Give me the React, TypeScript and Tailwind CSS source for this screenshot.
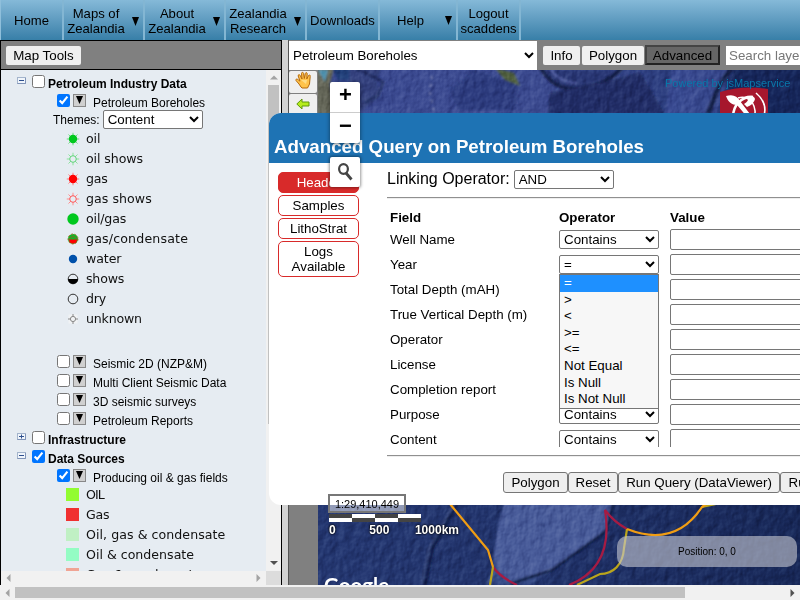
import React from "react";

const navItems = [
  { label: "Home", width: "w-[63px]", arrow: false },
  { label: "Maps of Zealandia", width: "w-[81px]", arrow: true },
  { label: "About Zealandia", width: "w-[81px]", arrow: true },
  { label: "Zealandia Research", width: "w-[81px]", arrow: true },
  { label: "Downloads", width: "w-[73px]", arrow: false },
  { label: "Help", width: "w-[78px]", arrow: true },
  { label: "Logout scaddens", width: "w-[63px]", arrow: false },
];

function NavBar() {
  return (
    <nav className="flex h-10 shrink-0 border-l border-[#8fbfdb] bg-linear-to-b from-[#85b9d8] to-[#377fa8] text-[13.1px] leading-[15px]">
      {navItems.map((n) => (
        <div key={n.label} className={`flex shrink-0 items-center border-r-2 border-[#83b6d3] ${n.label.includes(" ") ? "pt-[2px]" : ""} ${n.width}`}>
          <span className={`flex-1 text-center ${n.arrow ? "pr-1" : ""}`}>{n.label}</span>
          {n.arrow && (
            <svg className="mr-1 h-[9px] w-[7px] shrink-0" viewBox="0 0 7 9">
              <path d="M0 0H7L3.5 9Z" />
            </svg>
          )}
        </div>
      ))}
    </nav>
  );
}

const spokes = "M6.5 0V13M0 6.5H13M2 2L11 11M11 2L2 11";

function WellIcon({ kind }: { kind: string }) {
  return (
    <svg className="h-[13px] w-[13px] shrink-0 translate-x-[0.5px] translate-y-[0.5px]" viewBox="0 0 13 13" fill="none">
      {kind === "oil" && <><path d={spokes} stroke="#6fd884" /><circle cx="6.5" cy="6.5" r="4.2" fill="#00c81e" /></>}
      {kind === "oil shows" && <><path d={spokes} stroke="#8be29c" /><circle cx="6.5" cy="6.5" r="3.3" fill="#e6ecf2" stroke="#5fd478" /></>}
      {kind === "gas" && <><path d={spokes} stroke="#ff7d7d" /><circle cx="6.5" cy="6.5" r="4.2" fill="#f00" /></>}
      {kind === "gas shows" && <><path d={spokes} stroke="#ff8c8c" /><circle cx="6.5" cy="6.5" r="3.3" fill="#e6ecf2" stroke="#f55" /></>}
      {kind === "oil/gas" && <circle cx="6.5" cy="6.5" r="5.7" fill="#00c81e" />}
      {kind === "gas/condensate" && (
        <>
          <circle cx="6.5" cy="6.5" r="5" fill="#14b428" stroke="#a87832" strokeDasharray="2 1.5" />
          <path d="M2.5 7H10.5A4 4 0 0 1 2.5 7Z" fill="#f00" />
          <path d="M2 7L6.5 3.5L11 7" stroke="#7a7020" />
        </>
      )}
      {kind === "water" && <circle cx="6.5" cy="6.5" r="4.2" fill="#0050aa" />}
      {kind === "shows" && <><circle cx="6.5" cy="6.5" r="4.8" stroke="#333" /><path d="M1.5 6.5H11.5A5 5 0 0 1 1.5 6.5Z" fill="#000" /></>}
      {kind === "dry" && <circle cx="6.5" cy="6.5" r="4.8" stroke="#333" />}
      {kind === "unknown" && <><rect x="2" y="2" width="9" height="9" fill="#f0f2f4" /><path d="M6.5 1.5V11.5M1.5 6.5H11.5" stroke="#888" /><circle cx="6.5" cy="6.5" r="2.6" fill="#f0f2f4" stroke="#888" /></>}
    </svg>
  );
}

const wells = [
  ["oil", "tracking-[-0.1px]"],
  ["oil shows", "tracking-[-0.1px]"],
  ["gas", "tracking-[-0.2px]"],
  ["gas shows", "tracking-[0.05px]"],
  ["oil/gas", "tracking-[-0.15px]"],
  ["gas/condensate", "tracking-[0.16px]"],
  ["water", "tracking-[-0.1px]"],
  ["shows", "tracking-[-0.2px]"],
  ["dry", "tracking-[-0.2px]"],
  ["unknown", "tracking-[-0.2px]"],
];
const fields = [
  ["OIL", "bg-[#92fc30]", "tracking-[-0.9px]"],
  ["Gas", "bg-[#f03030]", "tracking-[-0.2px]"],
  ["Oil, gas & condensate", "bg-[#c0f0c4]", "tracking-[0.05px]"],
  ["Oil & condensate", "bg-[#94fcc4]", "tracking-[0px]"],
  ["Gas & condensate", "bg-[#f0a494]", "tracking-[0px]"],
];

function Toggle({ open }: { open: boolean }) {
  return (
    <svg className="mr-[6px] h-[9px] w-[9px] shrink-0 -translate-y-[4px]" viewBox="0 0 9 9">
      <rect x=".5" y="1.5" width="8" height="6" fill="#f0f5fb" stroke="#a3b4cc" />
      <path d="M.5 7.5H8.5V2" fill="none" stroke="#8094b8" />
      <path d={open ? "M2 4.5H7" : "M2 4.5H7M4.5 2.5V6.5"} stroke="#2d4f8e" />
    </svg>
  );
}

function Group({ label, open, checked }: { label: string; open: boolean; checked: boolean }) {
  return (
    <div className="flex h-[19px] shrink-0 items-center pl-4">
      <Toggle open={open} />
      <input type="checkbox" defaultChecked={checked} className="mr-[3px] h-[13px] w-[13px] -translate-y-[3px]" />
      <b className="whitespace-nowrap">{label}</b>
    </div>
  );
}

function Layer({ label, checked = false }: { label: string; checked?: boolean }) {
  return (
    <div className="flex h-[19px] shrink-0 items-center pl-14">
      <input type="checkbox" defaultChecked={checked} className="mr-[3px] h-[13px] w-[13px] -translate-y-[3px]" />
      <span className="mr-[7px] flex h-[13px] w-[13px] shrink-0 -translate-y-[3px] justify-center border border-[#888] bg-[#d0d0d0] pt-[1px]">
        <svg className="h-2 w-[7px]" viewBox="0 0 7 8"><path d="M0 0H7L3.5 8Z" /></svg>
      </span>
      <span className="whitespace-nowrap">{label}</span>
    </div>
  );
}

const legendText = "whitespace-nowrap font-['DejaVu_Sans'] text-[12.6px] text-[#111]";

function ArrowHead({ dir, dark }: { dir: "up" | "down" | "left" | "right"; dark?: boolean }) {
  const d = { up: "M4 7.5L8 3.5L12 7.5Z", down: "M4 4L8 8L12 4Z", left: "M9.5 2L5.5 6L9.5 10Z", right: "M6.5 2L10.5 6L6.5 10Z" }[dir];
  return <svg className="h-3 w-4 shrink-0" viewBox="0 0 16 12"><path d={d} fill={dark ? "#505050" : "#a3a3a3"} /></svg>;
}

function LayerPanel() {
  return (
    <aside className="flex w-[282px] shrink-0 flex-col border-x border-t border-black">
      <div className="flex h-[29px] shrink-0 items-center border-b border-black bg-[#808080] pl-[5px]">
        <button className="h-[19px] w-[75px] rounded-[2px] bg-[#efefef] text-[13.33px] leading-[19px]">Map Tools</button>
      </div>
      <div className="flex min-h-0 flex-1">
        <div className="flex min-w-0 flex-1 flex-col">
          <div className="flex min-h-0 flex-1 flex-col overflow-hidden bg-[#e6ecf2] pt-[5px] text-[12px] leading-[19px]">
            <Group label="Petroleum Industry Data" open checked={false} />
            <div className="h-[16px] shrink-0"><Layer label="Petroleum Boreholes" checked /></div>
            <div className="flex h-[19px] shrink-0 items-center pl-[52px]">
              <span className="mr-[3px] translate-y-px">Themes:</span>
              <select className="h-[19px] w-[100px] rounded-[2px] border border-[#767676] bg-white text-[13.33px]"><option>Content</option></select>
            </div>
            {wells.map(([name, spacing]) => (
              <div key={name} className="flex h-5 shrink-0 items-center gap-[7px] pb-px pl-[65px]">
                <WellIcon kind={name} />
                <span className={`${legendText} ${spacing}`}>{name}</span>
              </div>
            ))}
            <div className="h-[26px] shrink-0" />
            <Layer label="Seismic 2D (NZP&M)" />
            <Layer label="Multi Client Seismic Data" />
            <Layer label="3D seismic surveys" />
            <Layer label="Petroleum Reports" />
            <Group label="Infrastructure" open={false} checked={false} />
            <Group label="Data Sources" open checked />
            <div className="h-[16px] shrink-0"><Layer label="Producing oil & gas fields" checked /></div>
            {fields.map(([name, color, spacing]) => (
              <div key={name} className="flex h-5 shrink-0 items-center gap-[7px] pb-px pl-[65px]">
                <span className={`h-[13px] w-[13px] shrink-0 ${color}`} />
                <span className={`${legendText} ${spacing}`}>{name}</span>
              </div>
            ))}
          </div>
          <div className="flex h-[14px] shrink-0 items-center justify-between bg-[#f1f1f1]">
            <ArrowHead dir="left" /><ArrowHead dir="right" />
          </div>
        </div>
        <div className="flex w-[15px] shrink-0 flex-col bg-[#f1f1f1]">
          <div className="h-[15px] pt-0.5"><ArrowHead dir="up" /></div>
          <div className="ml-[2px] h-[339px] w-[11px] bg-[#c1c1c1]" />
          <div className="flex flex-1 items-end pb-[2px]"><ArrowHead dir="down" dark /></div>
          <div className="h-[14px] bg-[#dcdcdc]" />
        </div>
      </div>
    </aside>
  );
}

function Terrain() {
  return (
    <svg className="absolute inset-0 h-full w-full" viewBox="318 70 482 515" preserveAspectRatio="none">
      <defs>
        <linearGradient id="sea" x1="0" y1="0" x2="1" y2="0">
          <stop offset="0" stopColor="#3c4b92" /><stop offset=".5" stopColor="#3d4c91" /><stop offset=".75" stopColor="#2b3d7d" /><stop offset="1" stopColor="#152352" />
        </linearGradient>
        <linearGradient id="deep" x1="0" y1="0" x2="1" y2="0">
          <stop offset="0" stopColor="#253872" /><stop offset=".45" stopColor="#22346c" /><stop offset="1" stopColor="#182858" />
        </linearGradient>
        <filter id="relief" x="0" y="0" width="100%" height="100%" colorInterpolationFilters="sRGB">
          <feTurbulence type="fractalNoise" baseFrequency=".12 .09" numOctaves="4" seed="9" />
          <feDiffuseLighting surfaceScale="1.6" lightingColor="#fff" diffuseConstant="1"><feDistantLight azimuth="225" elevation="29" /></feDiffuseLighting>
        </filter>
        <filter id="soft"><feGaussianBlur stdDeviation="1.3" /></filter>
      </defs>
      <rect x="318" y="70" width="482" height="50" fill="url(#sea)" />
      <g filter="url(#soft)">
        <path d="M316 68H334L330 84L334 114H316Z" fill="#686a5c" />
        <path d="M318 70H328L325 82Z" fill="#4f91ad" />
        <path d="M332 68H356L352 80H338Z" fill="#24407a" />
        <path d="M350 68H382L376 80L380 96L363 110L348 112Z" fill="#35437f" />
        <path d="M356 68L383 82L378 96L364 103" fill="none" stroke="#222e64" strokeWidth="3" />
        <path d="M475 70L518 85L516 110H458L450 90Z" fill="#2e3e80" />
        <path d="M495 68L514 73L520 86L505 80Z" fill="#51613f" />
        <path d="M545 70H622L600 86L572 90L554 83Z" fill="#2a3976" />
        <path d="M541 68Q552 88 573 89Q605 87 622 68" fill="none" stroke="#18204c" strokeWidth="4" />
        <path d="M550 68Q558 82 576 83" fill="none" stroke="#5361a4" strokeWidth="2" />
        <path d="M550 92Q595 86 640 72L665 114H548Z" fill="#222f68" />
        <path d="M665 114L672 68H730L718 114Z" fill="#4656a0" opacity=".6" />
        <path d="M735 68H802V116H722Z" fill="#18265a" />
        <path d="M731 68L718 88L708 114" fill="none" stroke="#16204a" strokeWidth="5" />
        <path d="M432 76L430 92L434 112" fill="none" stroke="#8a91b8" strokeWidth="1.5" strokeDasharray="3 5" />
      </g>
      <rect x="318" y="500" width="482" height="85" fill="url(#deep)" />
      <g filter="url(#soft)">
        <path d="M506 500H613L604 533L580 550L552 570L505 582L493 558L499 520Z" fill="#485b9a" />
        <path d="M493 558L505 582L552 570L530 585H488Z" fill="#384d89" />
        <path d="M614 500L606 531L580 550L552 570L510 584" fill="none" stroke="#101c42" strokeWidth="2.5" />
        <path d="M457 505L433 548L425 585" fill="none" stroke="#111d48" strokeWidth="3" />
        <path d="M453 505L429 548L421 585" fill="none" stroke="#4d5d8e" strokeWidth="1.2" />
        <circle cx="543" cy="525" r="1.6" fill="#253a78" />
      </g>
      <rect x="318" y="70" width="482" height="515" filter="url(#relief)" opacity=".45" className="mix-blend-soft-light" />
      <g fill="none" strokeWidth="2.2">
        <path d="M493 567Q500 577 517 585M569 585C600 573 611 547 605 510Q614 522 627 529" stroke="#a61b43" />
        <path d="M493 567L490 585M577 585L600 574C613 574 623 565 624 548L627 529M702 507L716 504" stroke="#baa51c" />
        <path d="M450 504L488 550L493 567M627 529Q675 548 702 507L706 504" stroke="#f09d13" />
      </g>
    </svg>
  );
}

const toolButton = "flex h-[22px] w-7 items-center justify-center rounded-[2px] bg-[#efefef]";

function MapPane() {
  return (
    <main className="flex min-w-0 flex-1 flex-col border-l border-[#555]">
      <div className="flex h-[30px] shrink-0 items-center overflow-hidden bg-[#808080]">
        <select className="h-[29px] w-[248px] shrink-0 bg-white text-[13.33px]"><option>Petroleum Boreholes</option></select>
        <div className="ml-[6px] flex shrink-0 items-center text-[13.33px] leading-[19px]">
          <button className="h-[19px] w-[37px] rounded-[2px] bg-[#efefef]">Info</button>
          <button className="ml-[2px] h-[19px] w-[62px] rounded-[2px] bg-[#efefef]">Polygon</button>
          <button className="ml-[1px] h-[20px] w-[75px] border-2 border-t-[#444] border-r-[#222] border-b-[#222] border-l-[#444] bg-[#666] pt-px leading-[16px]">Advanced</button>
          <input placeholder="Search layers" className="ml-[6px] h-[19px] w-[120px] bg-white px-[3px] placeholder:text-[#777]" />
        </div>
      </div>
      <div className="flex min-h-0 flex-1">
        <div className="flex w-[29px] shrink-0 flex-col gap-[1px] bg-[#808080] pt-px">
          <div className={`pb-1 pl-px ${toolButton}`}>
            <svg className="h-[18px] w-[18px]" viewBox="0 0 18 18">
              <path d="M6 16L4 13L1 9.5C.3 8 2 7.5 3.5 9L5 10.2L3.2 5C3 3.5 4.5 3 5.2 4.5L7 8L6.5 2.5C6.5 1 8.4 1 8.6 2.5L9.3 7.5L10.3 2.5C10.8 1 12.4 1.6 12.2 3L11.8 8L13.5 4.5C14.3 3.4 15.6 4.2 15.2 5.5L14.5 13L12.5 17H7Z" fill="#ffc34b" stroke="#b5690c" />
              <path d="M6 9L12 9L11 13Z" fill="#ffdc85" />
            </svg>
          </div>
          <div className={`pb-[3px] ${toolButton}`}>
            <svg className="h-3 w-[14px]" viewBox="0 0 14 12"><path d="M.8 6L6 1V4H13V8H6V11Z" fill="#b5ec1b" stroke="#5f970d" /></svg>
          </div>
        </div>
        <div className="relative min-w-0 flex-1 overflow-hidden">
          <Terrain />
          <svg className="absolute top-[17px] left-[402px] h-12 w-12" viewBox="0 0 48 48">
            <path d="M0 5Q24-2 48 2V48H0Z" fill="#a6172d" />
            <g fill="none" stroke="#fff">
              <path d="M33 10C22 9 13 18 13 30" strokeWidth="2.6" />
              <path d="M18 11C27 8 36 15 35 28" strokeWidth="1.6" />
              <path d="M36 6Q49 17 43 32" strokeWidth="1.6" />
            </g>
            <path d="M6 9C13 7 17 9 20 14L33 31H28L17 18C12 18 8 15 6 9Z" fill="#fff" />
            <path d="M24 10Q34 7 35 12Q34 17 27 20L24 17Q29 14 28 11Z" fill="#fff" />
          </svg>
          <span className="absolute top-[6px] left-[347px] text-[11px] leading-[15px] whitespace-nowrap text-[#0878aa]">Powered by jsMapservice</span>
          <span className="absolute top-[501px] left-[6px] font-[Lato] text-[20.5px] leading-[28px] font-bold text-white">Google</span>
          <div className="absolute top-[466px] left-[299px] h-[31px] w-[180px] rounded-[10px] bg-[#c8cad2]/60 text-center text-[10px] leading-[31px]">Position: 0, 0</div>
        </div>
      </div>
    </main>
  );
}

const queryFields = ["Well Name", "Year", "Total Depth (mAH)", "True Vertical Depth (m)", "Operator", "License", "Completion report", "Purpose", "Content"];
const options = ["=", ">", "<", ">=", "<=", "Not Equal", "Is Null", "Is Not Null"];
const tab = "flex w-[81px] items-center justify-center rounded-[5px] border border-[#d82a2a] text-center leading-[15px]";
const formButton = "h-[21px] shrink-0 rounded-[3px] border border-[#767676] bg-[#efefef] leading-[19px] whitespace-nowrap";

function QueryDialog() {
  return (
    <section className="absolute top-[113px] left-[269px] flex h-[392px] w-[640px] flex-col overflow-hidden rounded-[12px] bg-white text-[13.33px]">
      <h2 className="h-[50px] shrink-0 bg-[#1e73b4] pt-[22px] pl-[5px] text-[18.72px] leading-[23px] font-bold text-white">Advanced Query on Petroleum Boreholes</h2>
      <div className="flex min-h-0 flex-1">
        <div className="flex w-[118px] shrink-0 flex-col gap-[2px] pt-[9px] pl-[9px]">
          <div className={`h-[21px] bg-[#d82a2a] text-white ${tab}`}>Header</div>
          <div className={`h-[21px] ${tab}`}>Samples</div>
          <div className={`h-[21px] ${tab}`}>LithoStrat</div>
          <div className={`h-[36px] ${tab}`}>Logs Available</div>
        </div>
        <div className="flex min-w-0 flex-1 flex-col">
          <div className="flex h-[34px] shrink-0 items-center pb-[2px]">
            <span className="mr-[4px] text-[16px]">Linking Operator:</span>
            <select className="h-[19px] w-[100px] rounded-[2px] border border-[#767676] bg-white"><option>AND</option></select>
          </div>
          <div className="h-[2px] shrink-0 border-t border-[#909090] bg-[#eee]" />
          <div className="h-[248px] shrink-0 overflow-hidden pt-2 pl-[3px]">
            <div className="flex h-5 items-center pt-[2px] font-bold">
              <span className="w-[169px]">Field</span><span className="w-[111px]">Operator</span><span>Value</span>
            </div>
            {queryFields.map((f) => (
              <div key={f} className="flex h-[25px] items-center">
                <span className="w-[169px]">{f}</span>
                <select className="mr-[11px] h-[19px] w-[100px] rounded-[2px] border border-[#767676] bg-white">
                  <option>{f === "Year" ? "=" : "Contains"}</option>
                </select>
                <input className="h-[21px] w-[170px] rounded-[2px] border border-[#767676] bg-white" />
              </div>
            ))}
          </div>
          <div className="mt-[8px] h-[2px] shrink-0 border-t border-[#909090] bg-[#eee]" />
          <div className="mt-[15px] flex pl-[116px]">
            <button className={`w-[65px] ${formButton}`}>Polygon</button>
            <button className={`w-[50px] ${formButton}`}>Reset</button>
            <button className={`w-[162px] ${formButton}`}>Run Query (DataViewer)</button>
            <button className={`w-[120px] ${formButton}`}>Run Query (Map)</button>
          </div>
        </div>
      </div>
      <div className="absolute top-[161px] left-[290px] h-[135px] w-[100px] border border-[#767676] bg-[#f7f7f7]">
        {options.map((o, i) => (
          <div key={o} className={`h-[16.6px] pl-1 leading-[16.6px] ${i === 0 ? "bg-[#1e90ff] text-white" : ""}`}>{o}</div>
        ))}
      </div>
    </section>
  );
}

function MapControls() {
  return (
    <>
      <div className="absolute top-[82px] left-[330px] h-[61px] w-[30px] rounded-[2px] bg-white text-center text-[22px] font-bold shadow-[0_1px_4px_rgba(0,0,0,0.5)]">
        <div className="h-[31px] border-b border-[#ccc] pl-px leading-[26px]">+</div>
        <div className="pl-px leading-[26px]">−</div>
      </div>
      <div className="absolute top-[157px] left-[330px] flex h-[30px] w-[30px] items-center justify-center rounded-[2px] bg-white shadow-[0_0_3px_1px_rgba(0,0,0,0.4)]">
        <svg className="h-[18px] w-4" viewBox="0 0 16 18" fill="none" stroke="#444">
          <ellipse cx="6.5" cy="6" rx="4.4" ry="4.8" strokeWidth="2.2" /><path d="M9 10L14.5 16.5" strokeWidth="2.8" />
        </svg>
      </div>
      <div className="absolute top-[494px] left-[328px]">
        <div className="flex h-[19px] w-[78px] items-center justify-center border-2 border-[#777] bg-white/50 pt-px text-[11px]">1:29,410,449</div>
        <div className="mt-px ml-px grid h-2 w-[92px] grid-cols-4 grid-rows-2 bg-[#444]">
          <i /><i className="bg-white" /><i /><i className="bg-white" />
          <i className="bg-white" /><i /><i className="bg-white" /><i />
        </div>
        <div className="mt-[2px] ml-px flex w-[130px] justify-between text-[12px] leading-[12px] font-bold text-white [text-shadow:0_0_2px_#000,0_0_2px_#000]">
          <span>0</span><span className="ml-[8px]">500</span><span>1000km</span>
        </div>
      </div>
    </>
  );
}

export default function App() {
  return (
    <div className="relative flex h-[600px] w-[800px] flex-col overflow-hidden bg-white font-['Liberation_Sans',Arial,sans-serif] text-black">
      <NavBar />
      <div className="flex min-h-0 flex-1">
        <LayerPanel />
        <div className="w-[6px] shrink-0 bg-[#d3d3d3]" />
        <MapPane />
      </div>
      <div className="flex h-[15px] shrink-0 items-center bg-[#f1f1f1]">
        <div className="w-[15px] shrink-0"><ArrowHead dir="left" /></div>
        <div className="h-[11px] w-[670px] bg-[#c1c1c1]" />
        <div className="ml-auto"><ArrowHead dir="right" dark /></div>
      </div>
      <QueryDialog />
      <MapControls />
    </div>
  );
}
